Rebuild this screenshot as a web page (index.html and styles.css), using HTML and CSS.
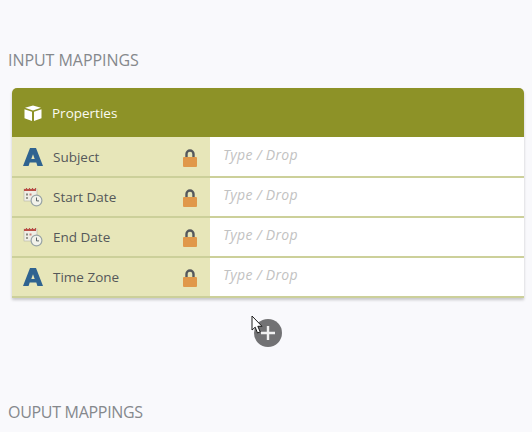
FILE: index.html
```html
<!DOCTYPE html>
<html lang="en">
<head>
<meta charset="utf-8">
<title>Mappings</title>
<link rel="stylesheet" href="styles.css">
</head>
<body>
<svg class="defs" width="0" height="0" aria-hidden="true">
  <symbol id="type-a" viewBox="0 0 20 20"><path fill="#2f6390" d="M7 1h6l7 18h-5.600l-1.100-3.400H6.700L5.600 19H0L7 1zm3 6.200L8.300 12h3.400L10 7.200z"/></symbol>
  <symbol id="lock" viewBox="0 0 14 18"><path fill="none" stroke="#54585c" stroke-width="2.400" d="M3.500 8V5a3.500 3.500 0 0 1 7 0v3"/><rect y="8" width="14" height="10" rx="1" fill="#e0984a"/></symbol>
  <symbol id="datetime" viewBox="0 0 20 20">
    <rect x="1" y="2" width="13" height="12" fill="#efeee6" stroke="#b5b5a8" stroke-width=".6"/>
    <path fill="#bb5046" d="M1 2h2V1h1v1h2V1h1v1h2V1h1v1h2V1h1v1h0V4H1z"/>
    <rect x="3" y="6.500" width="2" height="2" fill="#8a8a80"/><rect x="3" y="10" width="2" height="2" fill="#9a9a90"/><rect x="6.500" y="6.500" width="2" height="2" fill="#c9857b"/>
    <circle cx="13.500" cy="13.500" r="5.400" fill="#f2f2ea" stroke="#98a3a5" stroke-width="1.200"/>
    <path fill="none" stroke="#5b6668" stroke-width="1" d="M13.500 10.500v3.400h2.500"/>
  </symbol>
</svg>
<main class="page">
  <h2 class="section-title upper">INPUT MAPPINGS</h2>
  <section class="panel">
    <header class="panel-head">
      <svg class="cube" viewBox="0 0 18 18" aria-hidden="true"><path fill="#fff" d="M9 1.500l8 2.300-8 2.700-8-2.700 8-2.300zM.5 5.200l7.500 2.500V17l-7.500-2.800V5.200zm17 0v9L10 17V7.700l7.500-2.500z"/></svg>
      <span>Properties</span>
    </header>
    <div class="row">
      <div class="row-label"><svg class="icon"><use href="#type-a"/></svg><span class="name">Subject</span><svg class="lock"><use href="#lock"/></svg></div>
      <div class="row-input">Type / Drop</div>
    </div>
    <div class="row">
      <div class="row-label"><svg class="icon"><use href="#datetime"/></svg><span class="name">Start Date</span><svg class="lock"><use href="#lock"/></svg></div>
      <div class="row-input">Type / Drop</div>
    </div>
    <div class="row">
      <div class="row-label"><svg class="icon"><use href="#datetime"/></svg><span class="name">End Date</span><svg class="lock"><use href="#lock"/></svg></div>
      <div class="row-input">Type / Drop</div>
    </div>
    <div class="row">
      <div class="row-label"><svg class="icon"><use href="#type-a"/></svg><span class="name">Time Zone</span><svg class="lock"><use href="#lock"/></svg></div>
      <div class="row-input">Type / Drop</div>
    </div>
  </section>
  <div class="add-wrap">
    <div class="add-btn">
      <svg viewBox="0 0 28 28" aria-hidden="true"><circle cx="14" cy="14" r="14" fill="#727274"/><path stroke="#f2f2f2" stroke-width="2.400" d="M14 7v14M7 14h14"/></svg>
      <svg class="cursor" viewBox="0 0 12 20" aria-hidden="true"><path fill="#fff" stroke="#1c1c1c" stroke-width="1" d="M1 1v14l3.200-2.800 2.300 5.800 2.700-1.200-2.400-5.500H11L1 1z"/></svg>
    </div>
  </div>
  <h2 class="section-title lower">OUPUT MAPPINGS</h2>
</main>
</body>
</html>
```

FILE: styles.css
```css
* { box-sizing: border-box; }
html, body { margin: 0; height: 100%; }
body {
  background: #f9f9fc;
  font-family: "Open Sans", "Liberation Sans", sans-serif;
  overflow: hidden;
}
.defs { display: block; height: 0; }
.page { padding: 49px 8px 0; }
.section-title {
  margin: 0;
  font-size: 16px;
  line-height: 22px;
  font-weight: 400;
  color: #85888c;
}
.upper { letter-spacing: -0.05px; }
.lower { margin-top: 54px; letter-spacing: -0.3px; }
.panel {
  margin: 17px 0 0 4px;
  width: 512px;
  box-shadow: 0 2px 3px rgba(0, 0, 0, .2);
  border-radius: 5px 5px 0 0;
}
.panel-head {
  height: 49px;
  display: flex;
  align-items: center;
  gap: 10px;
  padding-left: 12px;
  background: #8d9227;
  color: #fbfbf2;
  font-size: 13.5px;
  border-radius: 5px 5px 0 0;
}
.cube { width: 18px; height: 18px; }
.row {
  height: 40px;
  display: flex;
  border-bottom: 2px solid #ccd09a;
}
.panel-head + .row { height: 41px; }
.row-label {
  width: 198px;
  display: flex;
  align-items: center;
  padding: 0 13px 0 11px;
  background: #e7e6b9;
  color: #55585a;
  font-size: 13.5px;
}
.icon { width: 20px; height: 20px; flex: none; }
.name { margin-left: 10px; flex: 1; }
.lock { width: 14px; height: 18px; flex: none; margin-top: 2px; }
.row-input {
  flex: 1;
  padding: 0 0 5px 13px;
  display: flex;
  align-items: center;
  background: #fff;
  color: #c2c2c2;
  font-size: 14px;
  font-style: italic;
  letter-spacing: 0.3px;
}
.add-wrap { display: flex; justify-content: center; margin-top: 21px; padding-left: 4px; }
.add-btn { position: relative; width: 28px; height: 28px; }
.add-btn > svg { display: block; }
.cursor { position: absolute; left: -3px; top: -4px; width: 12px; height: 20px; }
```
